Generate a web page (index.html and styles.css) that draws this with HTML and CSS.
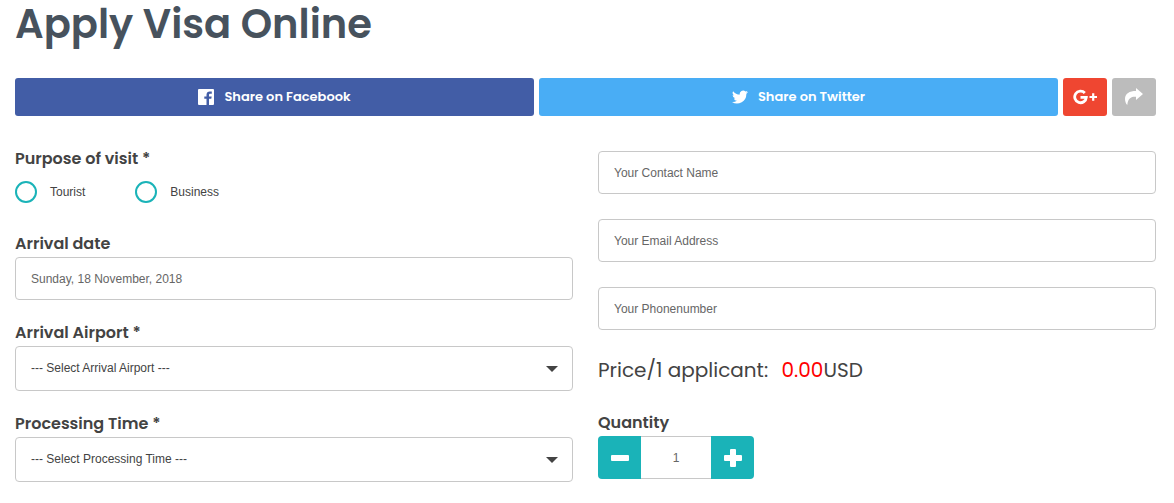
FILE: index.html
```html
<!DOCTYPE html>
<html lang="en">
<head>
    <meta charset="UTF-8">
    <meta name="viewport" content="width=device-width, initial-scale=1.0">
    <title>Apply Visa Online</title>
    <link rel="stylesheet" href="styles.css">
</head>
<body>
    <h1>Apply Visa Online</h1>

    <div class="share">
        <a class="share-link facebook" href="#">
            <svg width="16" height="16" viewBox="0 0 16 16"><path fill="#fff" d="M1 0h14a1 1 0 0 1 1 1v14a1 1 0 0 1-1 1h-4V9.800h2.300l.4-2.400H11V5.900c0-.8.4-1.200 1.300-1.200h1.500V2.500c-.4-.1-1.200-.1-2-.1-2 0-3.300 1.200-3.300 3.300v1.700H6.300v2.400h2.200V16H1a1 1 0 0 1-1-1V1a1 1 0 0 1 1-1z"/></svg>
            <span>Share on Facebook</span>
        </a>
        <a class="share-link twitter" href="#">
            <svg width="16" height="16" viewBox="0 0 24 24"><path fill="#fff" d="M24 4.600a10 10 0 0 1-2.800.8 5 5 0 0 0 2.100-2.700 10 10 0 0 1-3.100 1.200 4.900 4.900 0 0 0-8.400 4.500A14 14 0 0 1 1.700 3.200a4.900 4.900 0 0 0 1.500 6.500 5 5 0 0 1-2.200-.6v.1a4.900 4.900 0 0 0 3.900 4.800 5 5 0 0 1-2.200.1 4.900 4.900 0 0 0 4.600 3.400A9.900 9.900 0 0 1 0 19.500 14 14 0 0 0 21.500 7.100 10 10 0 0 0 24 4.600z"/></svg>
            <span>Share on Twitter</span>
        </a>
        <a class="share-link google" href="#" aria-label="Share on Google Plus">
            <svg width="24" height="16" viewBox="0 0 24 16"><path fill="none" stroke="#fff" stroke-width="2.800" d="M11.800 4A5.800 5.800 0 1 0 13.300 8.300H7.500"/><path fill="none" stroke="#fff" stroke-width="2.200" d="M16.500 8H24M20.200 4.300v7.400"/></svg>
        </a>
        <a class="share-link more" href="#" aria-label="Share">
            <svg width="18" height="18" viewBox="0 0 18 18"><path fill="#fff" d="M11 0l7 6-7 6V8.700C6 8.500 3 10 2.300 17 1 16 0 13.500 0 11 0 5.500 4.500 3 11 3z"/></svg>
        </a>
    </div>

    <form class="columns">
        <div class="column">
            <fieldset class="purpose">
                <legend class="label">Purpose of visit *</legend>
                <div class="radios">
                    <label class="radio"><input type="radio" name="purpose"> Tourist</label>
                    <label class="radio"><input type="radio" name="purpose"> Business</label>
                </div>
            </fieldset>
            <div class="field">
                <label class="label" for="arrivalDate">Arrival date</label>
                <input class="box" type="text" id="arrivalDate" value="Sunday, 18 November, 2018">
            </div>
            <div class="field">
                <label class="label" for="airport">Arrival Airport *</label>
                <div class="select">
                    <select class="box" id="airport">
                        <option>--- Select Arrival Airport ---</option>
                    </select>
                </div>
            </div>
            <div class="field">
                <label class="label" for="processing">Processing Time *</label>
                <div class="select">
                    <select class="box" id="processing">
                        <option>--- Select Processing Time ---</option>
                    </select>
                </div>
            </div>
        </div>

        <div class="column contact">
            <input class="box" type="text" aria-label="Your Contact Name" placeholder="Your Contact Name">
            <input class="box" type="email" aria-label="Your Email Address" placeholder="Your Email Address">
            <input class="box" type="tel" aria-label="Your Phonenumber" placeholder="Your Phonenumber">
            <p class="price">Price/1 applicant: <span class="total"><span class="amount">0.00</span>USD</span></p>
            <div class="field">
                <label class="label" for="quantity">Quantity</label>
                <div class="quantity">
                    <button type="button" class="minus" aria-label="Less">
                        <svg width="18" height="18" viewBox="0 0 18 18"><rect y="6" width="18" height="6" rx="1" fill="#fff"/></svg>
                    </button>
                    <input class="box" type="text" id="quantity" value="1">
                    <button type="button" class="plus" aria-label="More">
                        <svg width="18" height="18" viewBox="0 0 18 18"><rect y="6" width="18" height="6" rx="1" fill="#fff"/><rect x="6" width="6" height="18" rx="1" fill="#fff"/></svg>
                    </button>
                </div>
            </div>
        </div>
    </form>
</body>
</html>
```
FILE: styles.css
```css
* {
    box-sizing: border-box;
}
body {
    margin: 0;
    padding: 0 18px 20px 15px;
    font-family: Poppins, Inter, sans-serif;
    color: #434343;
    background-color: #fff;
}
h1 {
    margin: 0 0 30px;
    font-size: 40px;
    font-weight: 600;
    line-height: 48px;
    color: #47525d;
}
.share {
    display: flex;
    gap: 5px;
    margin-bottom: 30px;
}
.share-link {
    display: flex;
    align-items: center;
    justify-content: center;
    gap: 10px;
    width: 44px;
    height: 38px;
    border-radius: 3px;
    color: #fff;
    font-size: 13px;
    font-weight: 600;
    text-decoration: none;
}
.facebook {
    flex: 1;
    background-color: #425da6;
}
.twitter {
    flex: 1;
    background-color: #49adf5;
}
.google {
    background-color: #ef4631;
}
.more {
    background-color: #bcbcbc;
}
.columns {
    display: grid;
    grid-template-columns: 1fr 1fr;
    gap: 25px;
}
.column {
    display: flex;
    flex-direction: column;
    gap: 20px;
}
.label {
    display: block;
    padding: 0;
    font-size: 16px;
    font-weight: 600;
    line-height: 26px;
}
.purpose {
    margin: 0;
    padding: 0 0 8px;
    border: none;
}
.radios {
    display: flex;
    gap: 50px;
    padding-top: 9px;
}
.radio {
    display: flex;
    align-items: center;
    gap: 13px;
    font-family: "Helvetica Neue", "Liberation Sans", sans-serif;
    font-size: 12px;
}
.radio input {
    appearance: none;
    width: 22px;
    height: 22px;
    margin: 0;
    border: 2px solid #1ab3b8;
    border-radius: 50%;
}
.radio input:checked {
    background-color: #1ab3b8;
}
.box {
    display: block;
    width: 100%;
    height: 43px;
    padding: 0 15px;
    border: 1px solid #c8c8c8;
    border-radius: 4px;
    background-color: #fff;
    font-family: "Helvetica Neue", "Liberation Sans", sans-serif;
    font-size: 12px;
    font-weight: 300;
    color: #666;
}
.box::placeholder {
    color: #666;
}
.select {
    display: grid;
    align-items: center;
}
.select .box {
    grid-area: 1 / 1;
    appearance: none;
    height: 45px;
    padding-bottom: 2px;
    color: #434343;
}
.select::after {
    content: "";
    grid-area: 1 / 1;
    justify-self: end;
    margin-right: 15px;
    border: 6px solid transparent;
    border-top-color: #434343;
    border-bottom: none;
    pointer-events: none;
}
.contact {
    gap: 25px;
    padding-top: 5px;
}
.price {
    margin: 0;
    font-size: 20px;
    line-height: 30px;
}
.total {
    margin-left: 8px;
}
.amount {
    color: #f00;
}
.quantity {
    display: flex;
}
.quantity button {
    display: flex;
    align-items: center;
    justify-content: center;
    width: 43px;
    height: 43px;
    padding: 0;
    border: none;
    background-color: #1ab3b8;
    cursor: pointer;
}
.quantity .box {
    width: 70px;
    border-width: 1px 0;
    border-radius: 0;
    text-align: center;
}
.quantity .minus {
    border-radius: 4px 0 0 4px;
}
.quantity .plus {
    border-radius: 0 4px 4px 0;
}
```
